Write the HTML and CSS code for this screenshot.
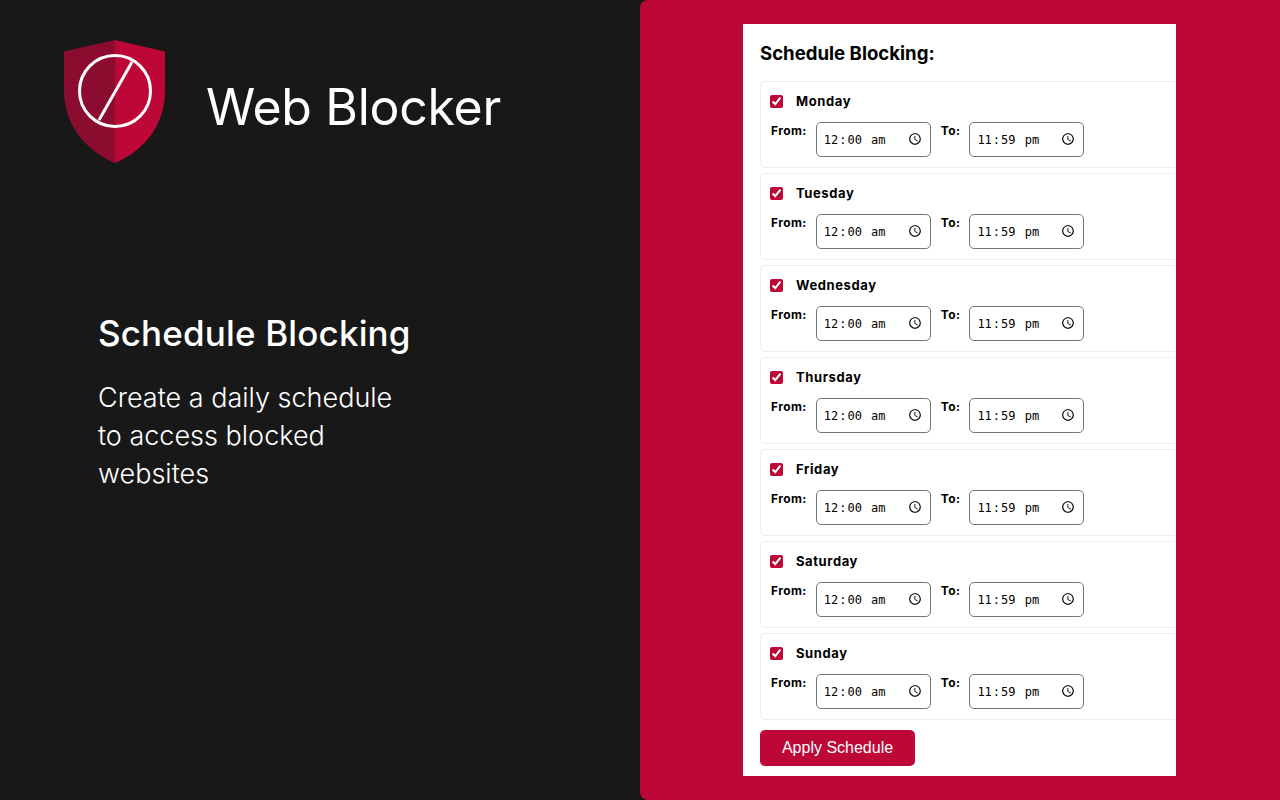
FILE: index.html
```html
<!DOCTYPE html>
<html>
<head>
    <title>Web Blocker - Schedule Blocking</title>
    <meta charset="UTF-8">
    <link rel="stylesheet" href="styles.css">
</head>
<body>
    <div class="left">
        <div class="brand">
            <svg class="logo" width="104" height="124" viewBox="0 0 104 124">
                <path d="M52 0 L1 11.5 V50 C1 85 22 110 52 123 Z" fill="#8c0c30"/>
                <path d="M52 0 L102 11.5 V50 C102 85 82 110 52 123 Z" fill="#bd0736"/>
                <circle cx="52" cy="51" r="35.5" fill="none" stroke="#fff" stroke-width="3"/>
                <line x1="69" y1="22" x2="36" y2="80" stroke="#fff" stroke-width="3"/>
            </svg>
            <div class="brand-name">Web Blocker</div>
        </div>
        <div class="intro">
            <h2>Schedule Blocking</h2>
            <p>Create a daily schedule<br>to access blocked<br>websites</p>
        </div>
    </div>

    <div class="right">
        <div class="panel">
            <h3>Schedule Blocking:</h3>

            <div class="day">
                <label class="day-name"><input type="checkbox" checked>Monday</label>
                <div class="times">
                    <label>From:</label><input type="time" value="00:00">
                    <label>To:</label><input type="time" value="23:59">
                </div>
            </div>
            <div class="day">
                <label class="day-name"><input type="checkbox" checked>Tuesday</label>
                <div class="times">
                    <label>From:</label><input type="time" value="00:00">
                    <label>To:</label><input type="time" value="23:59">
                </div>
            </div>
            <div class="day">
                <label class="day-name"><input type="checkbox" checked>Wednesday</label>
                <div class="times">
                    <label>From:</label><input type="time" value="00:00">
                    <label>To:</label><input type="time" value="23:59">
                </div>
            </div>
            <div class="day">
                <label class="day-name"><input type="checkbox" checked>Thursday</label>
                <div class="times">
                    <label>From:</label><input type="time" value="00:00">
                    <label>To:</label><input type="time" value="23:59">
                </div>
            </div>
            <div class="day">
                <label class="day-name"><input type="checkbox" checked>Friday</label>
                <div class="times">
                    <label>From:</label><input type="time" value="00:00">
                    <label>To:</label><input type="time" value="23:59">
                </div>
            </div>
            <div class="day">
                <label class="day-name"><input type="checkbox" checked>Saturday</label>
                <div class="times">
                    <label>From:</label><input type="time" value="00:00">
                    <label>To:</label><input type="time" value="23:59">
                </div>
            </div>
            <div class="day">
                <label class="day-name"><input type="checkbox" checked>Sunday</label>
                <div class="times">
                    <label>From:</label><input type="time" value="00:00">
                    <label>To:</label><input type="time" value="23:59">
                </div>
            </div>

            <button type="button">Apply Schedule</button>
        </div>
    </div>
</body>
</html>
```

FILE: styles.css
```css
:root {
    --primary-color: #BD0736;
    --bg-dark: #181818;
}

html, body {
    height: 100%;
}

body {
    background-color: var(--bg-dark);
    color: #fff;
    font-family: Inter, "Open Sans", sans-serif;
    margin: 0;
    display: flex;
    overflow: hidden;
}

.left {
    width: 640px;
    flex-shrink: 0;
    box-sizing: border-box;
    padding: 40px 0 0 63px;
}

.brand {
    display: flex;
    align-items: center;
    gap: 39px;
}

.logo {
    flex-shrink: 0;
}

.brand-name {
    font-size: 50px;
    font-weight: 400;
    letter-spacing: -0.3px;
    margin-top: 10px;
}

.intro {
    margin: 144px 0 0 35px;
}

.intro h2 {
    margin: 0;
    font-size: 35px;
    font-weight: 500;
    line-height: 50px;
    letter-spacing: 0.15px;
}

.intro p {
    margin: 21px 0 0;
    font-size: 27px;
    font-weight: 300;
    line-height: 38px;
}

.right {
    flex: 1;
    min-width: 0;
    background-color: var(--primary-color);
    border-radius: 8px 0 0 8px;
    padding: 24px 104px 24px 103px;
}

.panel {
    background-color: #fff;
    color: #000;
    height: 752px;
    box-sizing: border-box;
    padding: 15px 0 0 17px;
    overflow: hidden;
}

.panel h3 {
    margin: 0 0 14px;
    font-size: 18.6px;
    font-weight: 700;
    line-height: 28px;
}

.day {
    width: 440px;
    height: 87px;
    box-sizing: border-box;
    border: 1px solid #eee;
    border-radius: 5px;
    padding: 11px 9px 0;
    margin-bottom: 5px;
}

.day-name {
    display: flex;
    align-items: center;
    font-size: 13px;
    font-weight: 700;
    letter-spacing: 0.6px;
    line-height: 16px;
}

.day-name input {
    width: 13px;
    height: 13px;
    margin: 0 13px 0 0;
    accent-color: var(--primary-color);
}

.times {
    display: flex;
    align-items: flex-start;
    margin-top: 13px;
}

.times label {
    font-size: 12px;
    font-weight: 700;
    letter-spacing: 0.4px;
    line-height: 16px;
    margin: 1px 9px 0 1px;
}

.times input {
    width: 115px;
    height: 35px;
    box-sizing: border-box;
    border: 1px solid #767676;
    border-radius: 5px;
    background: #fff;
    padding: 1px 7px 0 6px;
    margin: 0 9px 0 0;
    font-family: "DejaVu Sans Mono", monospace;
    font-size: 12px;
}

.times input::-webkit-datetime-edit-ampm-field {
    text-transform: lowercase;
}

.times input::-webkit-calendar-picker-indicator {
    width: 14px;
    height: 14px;
    padding: 0;
    margin: 0 1px 3px 0;
}

button {
    display: block;
    width: 155px;
    height: 36px;
    margin-top: 10px;
    background-color: var(--primary-color);
    color: #fff;
    border: none;
    border-radius: 5px;
    font-family: "Liberation Sans", Arial, sans-serif;
    font-size: 16px;
    cursor: pointer;
}
```
